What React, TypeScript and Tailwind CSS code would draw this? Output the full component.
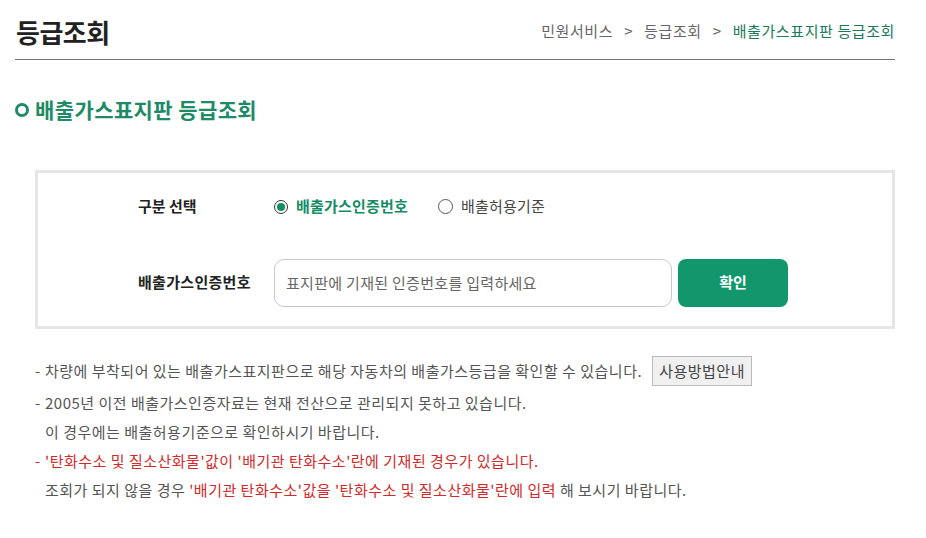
import { useState } from 'react';

const font = "font-['Noto_Sans_CJK_KR','Noto_Sans',sans-serif]";

const Radio = ({ checked, label, onClick }: { checked: boolean; label: string; onClick: () => void }) => (
  <button onClick={onClick} className="flex items-center gap-[8px]">
    {checked ? (
      <span className="flex h-[14px] w-[14px] items-center justify-center rounded-full border-[1.5px] border-[#333]">
        <span className="h-[8px] w-[8px] rounded-full bg-[#148d66]" />
      </span>
    ) : (
      <span className="h-[15px] w-[15px] rounded-full border border-[#555]" />
    )}
    <span className={checked ? 'text-[15px] font-bold tracking-[0.2px] text-[#148d66]' : 'text-[15px] tracking-[0.2px] text-[#444]'}>{label}</span>
  </button>
);

const App = () => {
  const [kind, setKind] = useState<'cert' | 'std'>('cert');

  return (
    <div className={`${font} min-h-[538px] w-[926px] bg-white`}>
      <div className="ml-[15px] w-[880px]">
        {/* 상단 타이틀 */}
        <div className="flex h-[60px] items-center justify-between border-b border-[#777] pt-[4px]">
          <h1 className="pl-[1px] text-[26px] font-bold tracking-[-0.5px] text-[#222]">등급조회</h1>
          <div className="flex items-center gap-[11px] text-[15px] tracking-[0.6px] text-[#666]">
            <span>민원서비스</span>
            <span>&gt;</span>
            <span>등급조회</span>
            <span>&gt;</span>
            <span className="text-[#1a7a5e]">배출가스표지판 등급조회</span>
          </div>
        </div>

        <h2 className="mt-[34px] flex items-center gap-[6px] text-[21px] font-bold tracking-[0.4px] text-[#1e8a68]">
          <span className="h-[14px] w-[14px] rounded-full border-[3px] border-[#1e8a68]" />
          배출가스표지판 등급조회
        </h2>

        {/* 조회 박스 */}
        <div className="ml-[20px] mt-[44px] w-[860px] border-[3px] border-[#e6e6e6] pb-[19px] pl-[100px] pt-[10px]">
          <div className="flex h-[48px] items-center">
            <span className="w-[136px] text-[15px] font-bold text-[#222]">구분 선택</span>
            <div className="flex items-center gap-[30px]">
              <Radio checked={kind === 'cert'} label="배출가스인증번호" onClick={() => setKind('cert')} />
              <Radio checked={kind === 'std'} label="배출허용기준" onClick={() => setKind('std')} />
            </div>
          </div>
          <div className="mt-[28px] flex h-[48px] items-center">
            <span className="w-[136px] text-[15px] font-bold tracking-[0.3px] text-[#222]">배출가스인증번호</span>
            <input
              placeholder="표지판에 기재된 인증번호를 입력하세요"
              className="h-[48px] w-[398px] rounded-[10px] border border-[#c8c8c8] px-[11px] text-[15px] tracking-[0.3px] text-[#333] outline-none placeholder:text-[#666]"
            />
            <button className="ml-[6px] h-[48px] w-[110px] rounded-[8px] bg-[#12976c] text-[15px] font-bold text-white">확인</button>
          </div>
        </div>

        {/* 안내 */}
        <div className="ml-[20px] mt-[27px] text-[15px] leading-[29px] tracking-[0.5px] text-[#555]">
          <div className="flex items-center">
            <span className="w-[10px]">-</span>
            <span>차량에 부착되어 있는 배출가스표지판으로 해당 자동차의 배출가스등급을 확인할 수 있습니다.</span>
            <button className="ml-[10px] h-[30px] border border-[#bbb] bg-[#f0f0f0] px-[6px] text-[15px] leading-[28px] text-[#444]">사용방법안내</button>
          </div>
          <div className="mt-[2px] flex">
            <span className="w-[10px] shrink-0">-</span>
            <span>
              2005년 이전 배출가스인증자료는 현재 전산으로 관리되지 못하고 있습니다.
              <br />이 경우에는 배출허용기준으로 확인하시기 바랍니다.
            </span>
          </div>
          <div className="flex">
            <span className="w-[10px] shrink-0 text-[#d22a2a]">-</span>
            <span>
              <span className="text-[#d22a2a]">'탄화수소 및 질소산화물'값이 '배기관 탄화수소'란에 기재된 경우가 있습니다.</span>
              <br />조회가 되지 않을 경우 <span className="text-[#d22a2a]">'배기관 탄화수소'값을 '탄화수소 및 질소산화물'란에 입력</span> 해 보시기 바랍니다.
            </span>
          </div>
        </div>
      </div>
    </div>
  );
};

export default App;
